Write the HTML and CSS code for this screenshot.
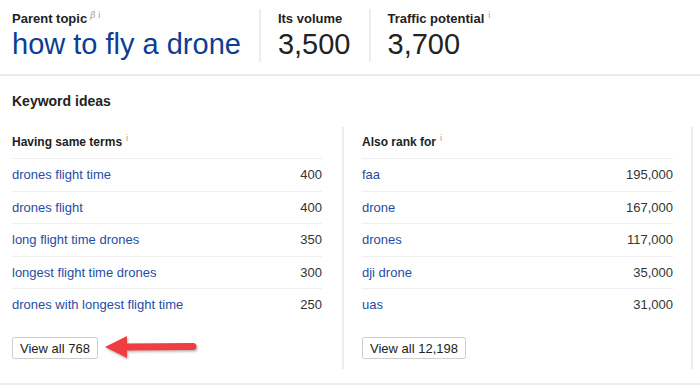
FILE: index.html
```html
<!DOCTYPE html>
<html>
<head>
<meta charset="utf-8">
<link rel="stylesheet" href="styles.css">
</head>
<body>
<div class="top">
  <div class="metric first">
    <div class="label">Parent topic<span class="sup beta">β</span><span class="sup">i</span></div>
    <div class="value topic">how to fly a drone</div>
  </div>
  <div class="metric">
    <div class="label">Its volume</div>
    <div class="value">3,500</div>
  </div>
  <div class="metric">
    <div class="label">Traffic potential<span class="sup">i</span></div>
    <div class="value">3,700</div>
  </div>
</div>
<div class="ideas">
  <h2 class="title">Keyword ideas</h2>
  <div class="cols">
    <div class="col left">
      <div class="col-head">Having same terms<span class="sup">i</span></div>
      <div class="row"><a>drones flight time</a><span class="num">400</span></div>
      <div class="row"><a>drones flight</a><span class="num">400</span></div>
      <div class="row"><a>long flight time drones</a><span class="num">350</span></div>
      <div class="row"><a>longest flight time drones</a><span class="num">300</span></div>
      <div class="row"><a>drones with longest flight time</a><span class="num">250</span></div>
      <div class="actions">
        <button class="btn">View all 768</button>
        <svg class="arrow" width="100" height="30" viewBox="0 0 100 30">
          <defs>
            <filter id="sh" x="-10%" y="-30%" width="130%" height="170%">
              <feDropShadow dx="1" dy="1.5" stdDeviation="1" flood-color="#555" flood-opacity="0.45"/>
            </filter>
          </defs>
          <g filter="url(#sh)" fill="#ef3d42">
            <polygon points="1,13 23,2 23,24"/>
            <path d="M21 9.5 L89 9 A3.5 3.5 0 0 1 89 16 L21 16.5 Z"/>
          </g>
        </svg>
      </div>
    </div>
    <div class="col right">
      <div class="col-head">Also rank for<span class="sup">i</span></div>
      <div class="row"><a>faa</a><span class="num">195,000</span></div>
      <div class="row"><a>drone</a><span class="num">167,000</span></div>
      <div class="row"><a>drones</a><span class="num">117,000</span></div>
      <div class="row"><a>dji drone</a><span class="num">35,000</span></div>
      <div class="row"><a>uas</a><span class="num">31,000</span></div>
      <div class="actions">
        <button class="btn">View all 12,198</button>
      </div>
    </div>
  </div>
</div>
</body>
</html>
```

FILE: styles.css
```css
* { box-sizing: border-box; }
html, body { margin: 0; padding: 0; background: #fff; }
body {
  font-family: "Liberation Sans", Arial, sans-serif;
  color: #333;
  width: 700px;
  height: 388px;
  overflow: hidden;
}
.top {
  display: flex;
  padding: 9px 12px 12px 12px;
  border-bottom: 2px solid #ececec;
}
.metric {
  height: 53px;
  padding-top: 2px;
  padding-right: 18px;
}
.metric + .metric {
  border-left: 2px solid #ededed;
  padding-left: 17px;
}
.label {
  font-size: 13px;
  line-height: 16px;
  font-weight: bold;
  color: #222;
}
.sup {
  font-weight: normal;
  font-size: 9px;
  line-height: 0;
  color: #9a9a9a;
  position: relative;
  top: -5px;
  margin-left: 4px;
}
.sup.beta {
  font-style: italic;
  font-family: "DejaVu Serif", serif;
  margin-left: 3px;
  margin-right: -1px;
}
.value {
  font-size: 29px;
  line-height: 34px;
  color: #222;
}
.value.topic { color: #0c3e95; }
.ideas {
  padding-left: 12px;
}
.title {
  margin: 16px 0 17px 0;
  font-size: 14px;
  line-height: 18px;
  font-weight: bold;
  color: #222;
}
.cols {
  display: grid;
  grid-template-columns: 332px 349px;
  border-bottom: 2px solid #ececec;
  margin-left: -12px;
  padding-left: 12px;
  width: 700px;
  padding-bottom: 14px;
}
.col {
  padding-bottom: 10px;
  border-right: 2px solid #ededed;
}
.col.left { padding-right: 20px; }
.col.right { padding-left: 18px; padding-right: 18px; }
.col-head {
  font-size: 12px;
  font-weight: bold;
  line-height: 16px;
  padding: 7px 0 8px 0;
  color: #222;
}
.row {
  display: flex;
  justify-content: space-between;
  align-items: center;
  height: 32.5px;
  border-top: 1px solid #efefef;
  font-size: 13px;
}
.row a { color: #1d4ea6; }
.row .num { color: #333; }
.actions {
  display: flex;
  align-items: center;
  margin-top: 16.5px;
  height: 22px;
}
.btn {
  font-family: "Liberation Sans", Arial, sans-serif;
  font-size: 13px;
  color: #222;
  background: #fff;
  border: 1px solid #cfcfcf;
  border-radius: 2px;
  height: 22px;
  padding: 0 7px;
  margin: 0;
}
.arrow {
  margin-left: 6px;
  margin-top: 2px;
}
```
